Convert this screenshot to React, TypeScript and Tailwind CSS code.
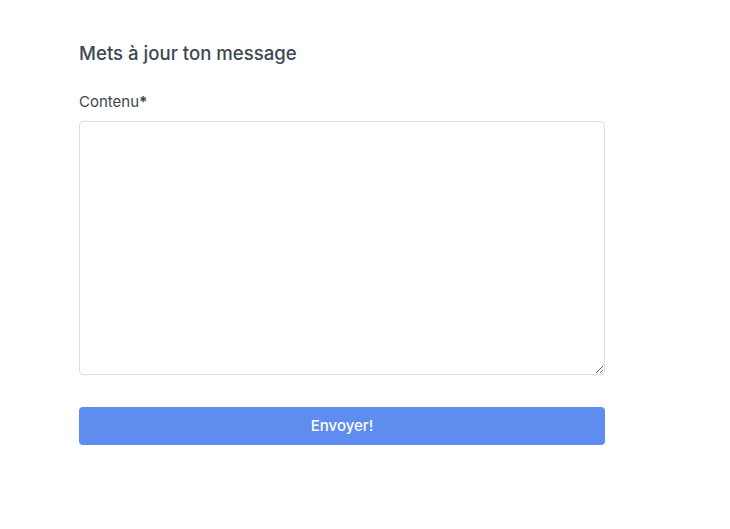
export default function App() {
  return (
    <div className="min-h-screen bg-white font-['Inter','Liberation_Sans',sans-serif] text-[#3d4852]">
      <div className="w-[526px] ml-[79px] pt-[40px]">
        <h1 className="text-[18.6px] font-medium leading-[26px]">Mets à jour ton message</h1>
        <form className="mt-[26px]">
          <label className="block text-[15px] leading-[20px] mb-[9px]">
            Contenu<span className="font-bold">*</span>
          </label>
          <textarea className="block w-full h-[254px] border border-[#dae1e7] rounded-[4px] px-3 py-2 text-[15px] outline-none" />
          <button
            type="button"
            className="mt-[32px] w-full h-[38px] rounded-[4px] bg-[#5e8cef] text-white text-[15px] font-medium"
          >
            Envoyer!
          </button>
        </form>
      </div>
    </div>
  );
}
